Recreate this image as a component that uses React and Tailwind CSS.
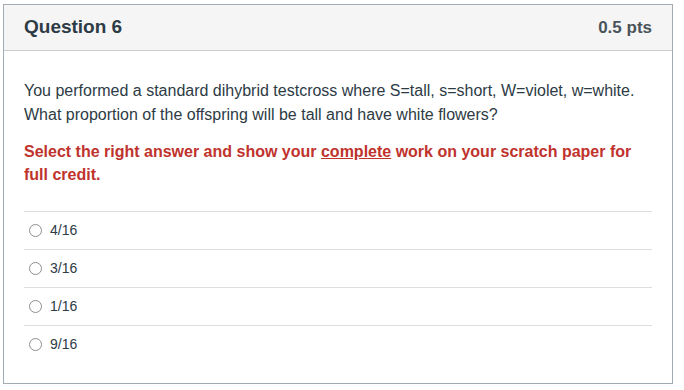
import React from 'react';

const options = ['4/16', '3/16', '1/16', '9/16'];

function Radio() {
    return (
        <span className="inline-block w-[13px] h-[13px] rounded-full border border-[#8a8f94] bg-white shrink-0"></span>
    );
}

export default function App() {
    return (
        <div className="w-[684px] h-[390px] bg-white pt-[4px] pl-[3px] font-['Liberation_Sans',Arial,sans-serif] text-[#2d3b45]">
            <div className="w-[670px] h-[380px] border border-[#a5acb1] flex flex-col">
                <div className="h-[46px] bg-[#f5f5f5] border-b border-[#c7cdd1] flex items-center justify-between px-5">
                    <span className="text-[19px] font-bold">Question 6</span>
                    <span className="text-[17px] font-bold text-[#4a545b]">0.5 pts</span>
                </div>
                <div className="px-5 pt-[28px]">
                    <p className="text-[16px] leading-[24px]">
                        You performed a standard dihybrid testcross where S=tall, s=short, W=violet, w=white. What proportion of the offspring will be tall and have white flowers?
                    </p>
                    <p className="mt-[13px] text-[16px] leading-[23px] font-bold text-[#c0332d]">
                        Select the right answer and show your <span className="underline">complete</span> work on your scratch paper for full credit.
                    </p>
                    <div className="mt-[25px]">
                        {options.map((o) => (
                            <div key={o} className="h-[38px] border-t border-[#dcdfe2] flex items-center gap-[8px] pl-[5px]">
                                <Radio />
                                <span className="text-[14px]">{o}</span>
                            </div>
                        ))}
                    </div>
                </div>
            </div>
        </div>
    );
}
